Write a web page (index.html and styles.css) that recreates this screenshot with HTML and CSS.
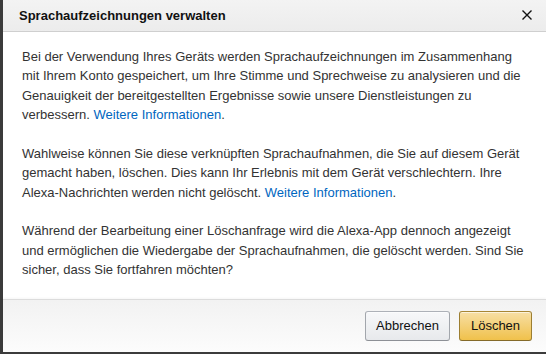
FILE: index.html
```html
<!DOCTYPE html>
<html lang="de">
<head>
<meta charset="utf-8">
<link rel="stylesheet" href="styles.css">
</head>
<body>
<div class="stage">
  <div class="modal">
    <div class="modal-header">
      <h2 class="modal-title">Sprachaufzeichnungen verwalten</h2>
      <button class="close" aria-label="Schließen">
        <svg width="10" height="10" viewBox="0 0 10 10"><path d="M0.5 0.5 L9.5 9.5 M9.5 0.5 L0.5 9.5" stroke="#111" stroke-width="1.4" fill="none"/></svg>
      </button>
    </div>
    <div class="modal-body">
      <p>Bei der Verwendung Ihres Geräts werden Sprachaufzeichnungen im Zusammenhang mit Ihrem Konto gespeichert, um Ihre Stimme und Sprechweise zu analysieren und die Genauigkeit der bereitgestellten Ergebnisse sowie unsere Dienstleistungen zu verbessern. <a href="#">Weitere Informationen</a>.</p>
      <p>Wahlweise können Sie diese verknüpften Sprachaufnahmen, die Sie auf diesem Gerät gemacht haben, löschen. Dies kann Ihr Erlebnis mit dem Gerät verschlechtern. Ihre Alexa-Nachrichten werden nicht gelöscht. <a href="#">Weitere Informationen</a>.</p>
      <p>Während der Bearbeitung einer Löschanfrage wird die Alexa-App dennoch angezeigt und ermöglichen die Wiedergabe der Sprachaufnahmen, die gelöscht werden. Sind Sie sicher, dass Sie fortfahren möchten?</p>
    </div>
    <div class="modal-footer">
      <button class="btn btn-secondary">Abbrechen</button>
      <button class="btn btn-primary">Löschen</button>
    </div>
  </div>
</div>
</body>
</html>
```

FILE: styles.css
```css
html, body {
  margin: 0;
  padding: 0;
  background: #3b3b3b;
  width: 546px;
  height: 354px;
  overflow: hidden;
}
.stage {
  display: flex;
  padding-left: 3px;
  height: 352px;
}
.modal {
  flex: 1;
  display: flex;
  flex-direction: column;
  background: #fff;
  font-family: "Liberation Sans", Arial, sans-serif;
  font-size: 13px;
  color: #111;
}
.modal-header {
  height: 35px;
  border-bottom: 1px solid #cfcfcf;
  background: linear-gradient(#f3f3f3, #ececec);
  display: flex;
  align-items: center;
  justify-content: space-between;
  padding: 0 12px 0 16px;
}
.modal-title {
  margin: 0;
  font-size: 13px;
  font-weight: bold;
  color: #111;
}
.close {
  border: 0;
  background: transparent;
  padding: 0;
  width: 14px;
  height: 14px;
  display: flex;
  align-items: center;
  justify-content: center;
  cursor: pointer;
}
.modal-body {
  flex: 1;
  padding: 15px 22px 0 19px;
  line-height: 19.5px;
  color: #333;
}
.modal-body p {
  margin: 0 0 19px;
}
.modal-body a {
  color: #0066c0;
  text-decoration: none;
}
.modal-footer {
  height: 60px;
  border-top: 1px solid #dcdcdc;
  box-shadow: 0 -1px 2px rgba(0,0,0,0.04);
  background: linear-gradient(#f2f2f2, #fcfcfc);
  display: flex;
  align-items: center;
  justify-content: flex-end;
  gap: 9px;
  padding: 0 14px 0 0;
}
.btn {
  height: 30px;
  border-radius: 3px;
  border: 1px solid;
  font-family: "Liberation Sans", Arial, sans-serif;
  font-size: 13px;
  color: #111;
  padding: 0 10px;
  box-shadow: 0 1px 0 rgba(255,255,255,0.6) inset;
}
.btn-secondary {
  width: 85px;
  background: linear-gradient(#f7f8fa, #e7e9ec);
  border-color: #adb1b8 #a2a6ac #8d9096;
}
.btn-primary {
  width: 73px;
  background: linear-gradient(#f7dfa5, #f0c14b);
  border-color: #a88734 #9c7e31 #846a29;
}
```
